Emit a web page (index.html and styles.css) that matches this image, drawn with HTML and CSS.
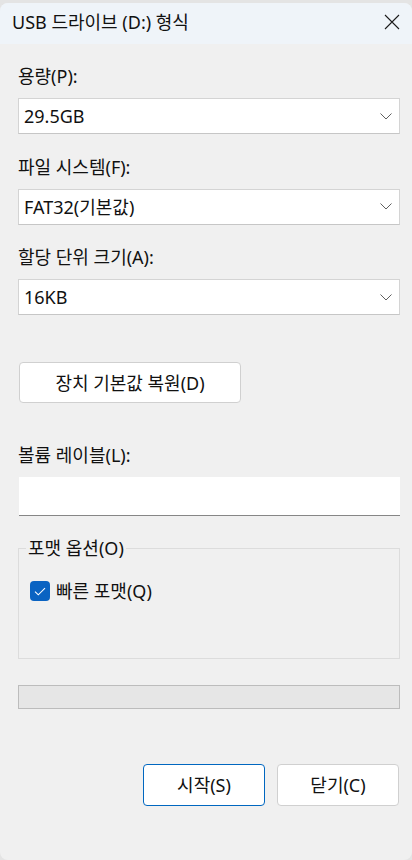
FILE: index.html
```html
<!DOCTYPE html>
<html lang="ko">
<head>
<meta charset="utf-8">
<title>USB 드라이브 (D:) 형식</title>
<link rel="stylesheet" href="styles.css">
</head>
<body>
<div class="window">
  <div class="titlebar">
    <span class="title">USB 드라이브 (D:) 형식</span>
    <svg class="close" width="16" height="16" viewBox="0 0 16 16"><path d="M1 1 L15 15 M15 1 L1 15" stroke="#1c1c1c" stroke-width="1.1" fill="none"/></svg>
  </div>
  <div class="content">
    <div class="field">
      <div class="label">용량(P):</div>
      <div class="select"><span>29.5GB</span><svg width="12" height="7" viewBox="0 0 12 7"><path d="M0.5 0.5 L6 6 L11.5 0.5" stroke="#5f5f5f" stroke-width="1" fill="none"/></svg></div>
    </div>
    <div class="field">
      <div class="label">파일 시스템(F):</div>
      <div class="select"><span>FAT32(기본값)</span><svg width="12" height="7" viewBox="0 0 12 7"><path d="M0.5 0.5 L6 6 L11.5 0.5" stroke="#5f5f5f" stroke-width="1" fill="none"/></svg></div>
    </div>
    <div class="field">
      <div class="label">할당 단위 크기(A):</div>
      <div class="select"><span>16KB</span><svg width="12" height="7" viewBox="0 0 12 7"><path d="M0.5 0.5 L6 6 L11.5 0.5" stroke="#5f5f5f" stroke-width="1" fill="none"/></svg></div>
    </div>
    <div class="btn restore">장치 기본값 복원(D)</div>
    <div class="label vol-label">볼륨 레이블(L):</div>
    <div class="textbox"></div>
    <fieldset class="group">
      <legend>포맷 옵션(O)</legend>
      <div class="check-row">
        <span class="checkbox"><svg width="12" height="9" viewBox="0 0 12 9"><path d="M1 4.6 L4.3 7.8 L11 1.2" stroke="#ffffff" stroke-width="1.1" fill="none"/></svg></span>
        <span>빠른 포맷(Q)</span>
      </div>
    </fieldset>
    <div class="progress"></div>
    <div class="actions">
      <div class="btn action default">시작(S)</div>
      <div class="btn action">닫기(C)</div>
    </div>
  </div>
</div>
</body>
</html>
```
FILE: styles.css
```css
html, body {
  margin: 0;
  padding: 0;
}
body {
  background: #e4e4e4;
  font-family: "Noto Sans", "Noto Sans CJK KR", sans-serif;
  font-size: 18px;
  color: #111111;
  width: 412px;
  height: 860px;
  overflow: hidden;
}
.window {
  margin-top: 3px;
  height: 857px;
  background: #f0f0f0;
  border-radius: 8px;
  overflow: hidden;
}
.titlebar {
  height: 41px;
  background: #eff4f9;
  display: flex;
  align-items: center;
  justify-content: space-between;
  padding: 0 12px 0 12px;
}
.title {
  line-height: 24px;
  margin-top: -3px;
}
.close {
  margin-right: 0;
  margin-top: -4px;
}
.content {
  padding: 20px 12px 0 18px;
}
.field {
  margin-bottom: 20.5px;
}
.label {
  line-height: 24px;
  margin-bottom: 10px;
}
.select {
  height: 36px;
  box-sizing: border-box;
  background: #ffffff;
  border: 1px solid #d4d4d4;
  border-bottom-color: #c6c6c6;
  display: flex;
  align-items: center;
  justify-content: space-between;
  padding: 0 7px 0 5px;
  line-height: 24px;
}
.btn {
  box-sizing: border-box;
  background: #ffffff;
  border: 1px solid #d0d0d0;
  border-radius: 4px;
  display: flex;
  align-items: center;
  justify-content: center;
  line-height: 24px;
}
.restore {
  width: 222px;
  height: 41px;
  margin-left: 1px;
  margin-top: 47px;
}
.vol-label {
  margin-top: 40px;
}
.textbox {
  height: 39px;
  box-sizing: border-box;
  background: #ffffff;
  margin-left: 1px;
  border-bottom: 1px solid #868686;
}
.group {
  margin: 20px 0 0 0;
  border: 1px solid #dcdcdc;
  padding: 0 0 55px 11px;
  min-inline-size: 0;
}
.group legend {
  line-height: 24px;
  padding: 0 2px;
  margin-left: -4px;
}
.check-row {
  margin-top: 19px;
  display: flex;
  align-items: center;
  gap: 6px;
  line-height: 24px;
}
.checkbox {
  width: 20px;
  height: 20px;
  border-radius: 4px;
  background: #0a63c2;
  display: flex;
  align-items: center;
  justify-content: center;
}
.progress {
  margin-top: 26px;
  height: 24px;
  box-sizing: border-box;
  background: #e6e6e6;
  border: 1px solid #bcbcbc;
}
.actions {
  margin-top: 55px;
  display: flex;
  justify-content: flex-end;
  gap: 12px;
  padding-right: 1px;
}
.action {
  width: 122px;
  height: 42px;
}
.action.default {
  border-color: #0067c0;
}
```
